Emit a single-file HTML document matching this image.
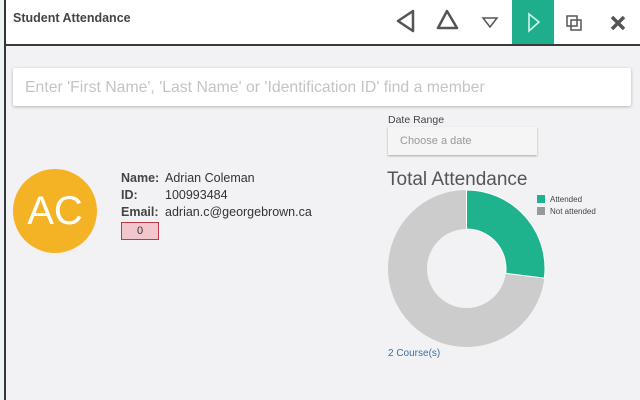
<!DOCTYPE html>
<html><head><style>
body{margin:0;width:640px;height:400px;overflow:hidden;background:#f2f2f4;font-family:"Liberation Sans",sans-serif;position:relative}
.lb{position:absolute;left:4px;top:0;width:2px;height:400px;background:#2d3a38}
.hdr{position:absolute;left:6px;top:0;width:634px;height:44px;background:#fff;border-bottom:2px solid #3a3a3a}
.t{position:absolute;left:7px;top:11px;font-size:12.5px;font-weight:bold;color:#444}
.btn{position:absolute;top:0;height:44px;width:42px}
.search{position:absolute;left:13px;top:68px;width:618px;height:38px;background:#fff;box-shadow:0 1px 3px rgba(0,0,0,.25);border-radius:2px}
.search span{position:absolute;left:12px;top:11px;font-size:15.8px;color:#c4c4c4}
.av{position:absolute;left:13px;top:169px;width:84px;height:84px;border-radius:50%;background:#f4b324;color:#fff;font-size:40px;text-align:center;line-height:84px}
.info{position:absolute;left:121px;font-size:12.5px;color:#333}
.info b{color:#444;display:inline-block;width:44px}
.zero{position:absolute;left:121px;top:222px;width:36px;height:16px;background:#f3c6cc;border:1.5px solid #c0394b;text-align:center;font-size:11px;line-height:16px;color:#333}
</style></head><body>
<div class="hdr"><div class="t">Student Attendance</div>
<svg class="btn" style="left:382px" viewBox="0 0 42 44"><path d="M25 11 L10 21 L25 31 Z" fill="none" stroke="#555" stroke-width="2.5" stroke-linejoin="round"/></svg>
<svg class="btn" style="left:420px" viewBox="0 0 42 44"><path d="M21 11 L12 28 L31 28 Z" fill="none" stroke="#555" stroke-width="2.5" stroke-linejoin="round"/></svg>
<svg class="btn" style="left:463px" viewBox="0 0 42 44"><path d="M14 18 L28 18 L21 27 Z" fill="none" stroke="#555" stroke-width="1.5"/></svg>
<div class="btn" style="left:506px;background:#1fae8c;width:42px"></div>
<svg class="btn" style="left:506px" viewBox="0 0 42 44"><path d="M17 14 L27 22 L17 31 Z" fill="none" stroke="#cff5ec" stroke-width="1.6"/></svg>
<svg class="btn" style="left:548px" viewBox="0 0 42 44"><rect x="13" y="16" width="10" height="10" fill="none" stroke="#555" stroke-width="1.5"/><rect x="17" y="20" width="10" height="10" fill="none" stroke="#555" stroke-width="1.5"/></svg>
<svg class="btn" style="left:592px" viewBox="0 0 42 44"><path d="M14 17 L26 29 M26 17 L14 29" stroke="#555" stroke-width="3.5"/></svg>
</div>
<div class="lb"></div>
<div class="search"><span>Enter 'First Name', 'Last Name' or 'Identification ID' find a member</span></div>
<div class="av">AC</div>
<div class="info" style="top:171px"><b>Name:</b>Adrian Coleman</div>
<div class="info" style="top:188px"><b>ID:</b>100993484</div>
<div class="info" style="top:205px"><b>Email:</b>adrian.c@georgebrown.ca</div>
<div class="zero">0</div>
<div style="position:absolute;left:388px;top:114px;font-size:10.5px;color:#444">Date Range</div>
<div style="position:absolute;left:388px;top:127px;width:149px;height:28px;background:#f5f5f5;box-shadow:0 1px 2px rgba(0,0,0,.3)"><span style="position:absolute;left:12px;top:8px;font-size:11px;color:#999">Choose a date</span></div>
<div style="position:absolute;left:387px;top:169px;font-size:19px;color:#555">Total Attendance</div>
<svg style="position:absolute;left:0;top:0" width="640" height="400">
<circle cx="466.5" cy="268.5" r="59" fill="none" stroke="#cccccc" stroke-width="39"/>
<path d="M466.5 190 A78.5 78.5 0 0 1 544.4 278.1 L505.7 273.3 A39.5 39.5 0 0 0 466.5 229 Z" fill="#1fb38d" stroke="#fff" stroke-width="1"/>
<rect x="537" y="195" width="8" height="8" fill="#1fb38d"/>
<rect x="537" y="207" width="8" height="8" fill="#999"/>
<text x="550" y="202" font-size="8" fill="#444" font-family="Liberation Sans">Attended</text>
<text x="550" y="214" font-size="8" fill="#444" font-family="Liberation Sans">Not attended</text>
</svg>
<div style="position:absolute;left:388px;top:348px;font-size:10px;color:#3a6fa8">2 Course(s)</div>
</body></html>
